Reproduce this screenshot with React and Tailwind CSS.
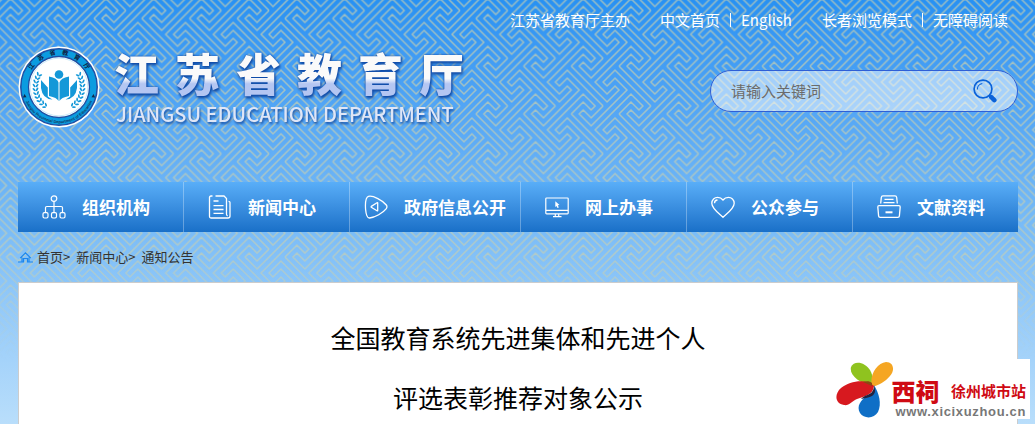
import React from 'react'

const topLinks = [
  [{ label: '江苏省教育厅主办', href: '#host' }],
  [
    { label: '中文首页', href: '#home' },
    { label: 'English', href: '#english' }
  ],
  [
    { label: '长者浏览模式', href: '#elder' },
    { label: '无障碍阅读', href: '#accessible' }
  ]
]

const OrgIcon = () => (
  <svg viewBox="0 0 24 24" className="w-6 h-6" fill="none" stroke="currentColor" strokeWidth="1.2">
    <circle cx="12" cy="3.6" r="2.8" />
    <path d="M12 6.4V17M3.5 17v-4.2q0-1.3 1.3-1.3h14.4q1.3 0 1.3 1.3V17" />
    <rect x="1" y="17.6" width="5" height="5.4" rx="1.4" />
    <rect x="9.5" y="17.6" width="5" height="5.4" rx="1.4" />
    <rect x="18" y="17.6" width="5" height="5.4" rx="1.4" />
  </svg>
)

const NewsIcon = () => (
  <svg viewBox="0 0 24 24" className="w-6 h-6" fill="none" stroke="currentColor" strokeWidth="1.3">
    <path d="M4.500 1H3q-1.500 0-1.500 1.500v19q0 1.500 1.500 1.500h17q2 0 2-2V7.500q0-1.200-1.500-1.200" />
    <path d="M7.500 1h8.500l2.500 2.500V19q0 1.500 1.200 2" />
    <path d="M5.500 6h5M5.500 10.700h10M5.500 14.500h10M5.500 18.300h10" />
  </svg>
)

const OpenIcon = () => (
  <svg viewBox="0 0 24 24" className="w-6 h-6" fill="none" stroke="currentColor" strokeWidth="1.3">
    <path d="M4.500 1.300C9 .2 19 5.500 22.300 10q1.300 1.800 0 3.700C19 18 11 22.500 5.500 23 2.500 23.200 2 19 1.600 14.500 1.200 9 1.500 2.300 4.500 1.300z" />
    <path d="M13.700 7.900v7.600q0 .7-.7.300L7.300 12.200q-.5-.4 0-.8L13 7.700q.7-.4.700.2z" />
  </svg>
)

const ScreenIcon = () => (
  <svg viewBox="0 0 24 24" className="w-6 h-6" fill="none" stroke="currentColor" strokeWidth="1.2">
    <rect x=".8" y="3" width="22.400" height="15.800" rx=".8" />
    <path d="M1 15.300h22M10.300 19v2.500M13.700 19v2.500M8 21.700h8.500" />
    <path d="M10.300 6.300l4.200 3.700-1.700.3 1 2.200-1.300.6-1-2.200-1.200 1.200z" fill="currentColor" stroke="none" />
  </svg>
)

const HeartIcon = () => (
  <svg viewBox="0 0 24 24" className="w-6 h-6" fill="none" stroke="currentColor" strokeWidth="1.3">
    <path d="M12 22.300C8 18.500.8 13.700.8 8.300.8 4.800 3.500 2.300 6.600 2.300c2.200 0 4 .9 5.400 2.700 1.400-1.800 3.200-2.700 5.400-2.700 3.100 0 5.800 2.500 5.800 6 0 5.400-7.200 10.200-11.200 14z" />
    <path d="M3.500 8.300c0-1.900 1.200-3.200 3-3.300" />
  </svg>
)

const ArchiveIcon = () => (
  <svg viewBox="0 0 24 24" className="w-6 h-6" fill="none" stroke="currentColor" strokeWidth="1.3">
    <path d="M3.700 8.500L4.300 2.500Q4.500.9 6 .9h12q1.500 0 1.700 1.600l.6 6" />
    <path d="M7.500 4.300h9M6.500 7.700h11" />
    <path d="M2 10.700h20q1.200 0 1.200 1.200l-.8 9q-.1 1.500-1.600 1.500H3.200q-1.500 0-1.600-1.500l-.8-9q0-1.200 1.200-1.200z" />
    <path d="M8.500 17.300h7" strokeWidth="2" />
  </svg>
)

const navItems = [
  { label: '组织机构', icon: OrgIcon },
  { label: '新闻中心', icon: NewsIcon },
  { label: '政府信息公开', icon: OpenIcon, wide: true },
  { label: '网上办事', icon: ScreenIcon },
  { label: '公众参与', icon: HeartIcon },
  { label: '文献资料', icon: ArchiveIcon }
]

// one period of the fret, the second strand is the first one turned by 180 degrees
const FRET = 'M16-4L4 8-4 0-8 4 4 16 40-20 28-32 20-24 16-28 28-40 64-4'
const offsets = [-96, -48, 0, 48, 96]

const Backdrop = () => (
  <svg className="absolute inset-0 w-full h-full" aria-hidden="true">
    <defs>
      <pattern
        id="fret"
        width="48"
        height="48"
        patternUnits="userSpaceOnUse"
        patternTransform="translate(14.500 14.500) scale(.9943)"
      >
        {offsets.map((x) =>
          offsets.map((y) => (
            <g key={`${x}_${y}`} transform={`translate(${x} ${y})`} fill="none" stroke="#ccd0ac" strokeWidth="1.5">
              <path d={FRET} />
              <path d={FRET} transform="rotate(180)" />
            </g>
          ))
        )}
      </pattern>
      <linearGradient id="fade" x1="0" y1="0" x2="0" y2="1">
        <stop offset="0" stopColor="#fff" stopOpacity=".72" />
        <stop offset=".6" stopColor="#fff" stopOpacity=".65" />
        <stop offset=".85" stopColor="#fff" stopOpacity="0" />
      </linearGradient>
      <mask id="fadeMask">
        <rect width="100%" height="100%" fill="url(#fade)" />
      </mask>
    </defs>
    <rect width="100%" height="100%" fill="url(#fret)" mask="url(#fadeMask)" />
  </svg>
)

const Emblem = () => (
  <svg viewBox="0 0 82 82" className="w-[82px] h-[82px] shrink-0" role="img" aria-label="江苏省教育厅">
    <defs>
      <path id="arcTop" d="M8.500 41a32.500 32.500 0 0 1 65 0" />
      <path id="arcBottom" d="M4.800 41a36.200 36.200 0 0 0 72.400 0" />
      <g id="leafHalf">
        {[0, 1, 2, 3, 4, 5, 6, 7, 8, 9].map((i) => (
          <g key={i} transform={`rotate(${32 - i * 9.5} 41 41)`}>
            <ellipse cx="16" cy="41" rx=".9" ry="2" transform="rotate(-40 16 41)" />
            <ellipse cx="19" cy="41" rx=".9" ry="2" transform="rotate(35 19 41)" />
          </g>
        ))}
      </g>
    </defs>
    <circle cx="41" cy="41" r="40.500" fill="#fff" />
    <circle cx="41" cy="41" r="38.200" fill="#0b9ce0" stroke="#1f4fa3" strokeWidth="1.500" />
    <circle cx="41" cy="41" r="30.500" fill="#fff" stroke="#1f4fa3" strokeWidth="1.300" />
    <circle cx="41" cy="41" r="28.800" fill="none" stroke="#bfe4f7" strokeWidth=".8" />
    <text fontSize="6" fontWeight="900" fill="#10284a" textAnchor="middle">
      <textPath href="#arcTop" startOffset="50%">江　苏　省　教　育　厅</textPath>
    </text>
    <text fontSize="4" fontWeight="700" fill="#123a63" textAnchor="middle" className="font-['Liberation_Sans',sans-serif]">
      <textPath href="#arcBottom" startOffset="50%">Jiangsu Provincial Department of Education</textPath>
    </text>
    <path d="M6.500 48l2 3.200-3.600.2zM75.500 48l-2 3.200 3.600.2z" fill="#10284a" />
    <g fill="#1498d8">
      <use href="#leafHalf" />
      <use href="#leafHalf" transform="matrix(-1 0 0 1 82 0)" />
      <circle cx="41" cy="28.500" r="4.300" />
      <path d="M31 30.500q8.500 1.500 9.500 6v18.500q-1.500-3.500-9.500-5z" />
      <path d="M51 30.500q-8.500 1.500-9.500 6v18.500q1.500-3.500 9.500-5z" />
      <path d="M23 34q3.500 4 6.800 7.500v9q2 1.500 4.700 3-10-.5-11.500-11.500z" />
      <path d="M59 34q-3.500 4-6.800 7.500v9q-2 1.500-4.700 3 10-.5 11.500-11.500z" />
    </g>
  </svg>
)

const SearchIcon = () => (
  <svg viewBox="0 0 24 24" className="w-6 h-6" fill="none" stroke="#0b62d8">
    <circle cx="10" cy="10" r="8.900" strokeWidth="1.700" />
    <path d="M4.300 10.500a6 6 0 0 1 5-6" strokeWidth="1.200" />
    <path d="M15.800 16l1.500 1.500" strokeWidth="1.800" />
    <path d="M18.300 18.200l3 3" strokeWidth="4.500" strokeLinecap="round" />
  </svg>
)

const HomeIcon = () => (
  <svg viewBox="0 0 15 12" className="w-[15px] h-3" fill="none" stroke="#1b86ee" strokeWidth="1.200">
    <path d="M0 11h5.500V7.500h4V11H15M2.200 7.200l5.300-5.400 5.300 5.400M4 6.500V11M11 6.500V11" />
  </svg>
)

const Flower = () => (
  <svg viewBox="0 0 58 58" className="w-[58px] h-[58px] shrink-0" aria-hidden="true">
    <path d="M36 25C24 22 13 15 15 6 18-1 29 1 34 9c3 5 3 10 2 16z" fill="#8fc31f" />
    <path d="M36 26C33 14 41 2 50 1c8 0 9 9 4 14-5 6-11 9-18 11z" fill="#f5a623" />
    <path d="M38 25C30 17 14 20 5 27c-7 6-6 16 3 17 5 1 8-4 13-6 8-3 16-4 17-13z" fill="#d7191f" />
    <path d="M38 24c5 8 8 19 4 27-4 7-14 7-18 1-4-7 1-13 7-17 5-3 8-5 7-11z" fill="#0f6fc6" />
    <path d="M38 25c2 5 1 8-2 10-4 2-8 2-11 3 3-4 9-4 11-7 1-2 2-3 2-6z" fill="#23233f" />
    <path d="M36 25c-3-1-6-3-9-4 3-1 7-1 9 1z" fill="#8a4a12" />
  </svg>
)

const Header = () => (
  <header>
    <div className="flex justify-end gap-[30px] pr-[10px] pt-[9px] text-[15px] leading-[22px] text-white">
      {topLinks.map((group) => (
        <div key={group[0].label} className="flex items-center">
          {group.map((link, i) => (
            <React.Fragment key={link.label}>
              {i > 0 && <span className="w-px h-[14px] mx-[10px] bg-white" />}
              <a href={link.href}>{link.label}</a>
            </React.Fragment>
          ))}
        </div>
      ))}
    </div>

    <div className="flex items-start justify-between pt-[15px]">
      <a href="#home" className="flex items-start gap-[14px]">
        <Emblem />
        <div className="flex flex-col drop-shadow-[1px_2px_1px_#1450a8]">
          <h1 className="flex gap-4 text-[45px] leading-[54px] font-black">
            {['江', '苏', '省', '教', '育', '厅'].map((char) => (
              <span
                key={char}
                className="bg-linear-to-b from-[#fafafa] from-60% to-[#b4c6f2] to-70% bg-clip-text text-transparent drop-shadow-[0_0_1px_#0b46a8]"
              >
                {char}
              </span>
            ))}
          </h1>
          <p className="pl-[2px] text-[20px] leading-7 font-medium text-[#dfe6f7]">JIANGSU EDUCATION DEPARTMENT</p>
        </div>
      </a>

      <form
        className="flex items-center w-[308px] h-[42px] mt-6 pl-5 pr-5 rounded-full border border-[#2f5fd6] bg-white/50"
        onSubmit={(e) => e.preventDefault()}
      >
        <input
          type="text"
          aria-label="请输入关键词"
          placeholder="请输入关键词"
          className="flex-1 min-w-0 bg-transparent text-[15px] text-[#555] placeholder:text-[#6b6b6b] focus:outline-none"
        />
        <button type="submit" aria-label="搜索">
          <SearchIcon />
        </button>
      </form>
    </div>
  </header>
)

const Navbar = () => (
  <nav className="grid grid-cols-[166fr_166fr_171fr_166fr_166fr_165fr] mt-[54px] bg-linear-to-b from-[#59aef8] to-[#1970c8]">
    {navItems.map(({ label, icon: Icon, wide }) => (
      <a
        key={label}
        href={`#${label}`}
        className={`flex items-center gap-4 h-[50px] border-r border-white/30 last:border-r-0 text-white text-[17px] font-bold whitespace-nowrap ${
          wide ? 'pl-[14px]' : 'pl-6'
        }`}
      >
        <Icon />
        <span>{label}</span>
      </a>
    ))}
  </nav>
)

const SiteBadge = () => (
  <div className="absolute right-[5px] top-[359px] z-10 flex items-start bg-white pt-[2px] h-[60px]">
    <Flower />
    <div className="pt-[18px] pr-1 -ml-[2px]">
      <div className="flex items-center justify-between text-[#cf0a13] leading-6 whitespace-nowrap">
        <span className="text-2xl leading-6 font-black">西祠</span>
        <span className="text-[15px] font-bold">徐州城市站</span>
      </div>
      <div className="pl-1 text-[13px] leading-[18px] font-bold tracking-wider text-[#777] font-['Liberation_Sans',sans-serif]">
        www.xicixuzhou.cn
      </div>
    </div>
  </div>
)

const App = () => {
  return (
    <div className="relative flex flex-col min-h-screen overflow-hidden bg-linear-to-b from-[#2791f3] via-[#74b9f7] via-50% to-[#b9defb] font-['Noto_Sans_CJK_SC',sans-serif]">
      <Backdrop />

      <div className="relative flex flex-col flex-1 pl-[18px] pr-[17px]">
        <Header />
        <Navbar />

        <div className="flex items-center gap-1 h-[50px] text-[13px] text-[#333]">
          <HomeIcon />
          <div className="flex gap-1.5">
            <span>
              <a href="#home">首页</a>&gt;
            </span>
            <span>
              <a href="#news">新闻中心</a>&gt;
            </span>
            <a href="#notice">通知公告</a>
          </div>
        </div>

        <main className="flex-1 border border-b-0 border-[#ccc] bg-white pt-[34px] text-center text-[25px] leading-10 text-black">
          <h2 className="flex flex-col gap-5">
            <span>全国教育系统先进集体和先进个人</span>
            <span>评选表彰推荐对象公示</span>
          </h2>
        </main>
      </div>

      <SiteBadge />
    </div>
  )
}

export default App
